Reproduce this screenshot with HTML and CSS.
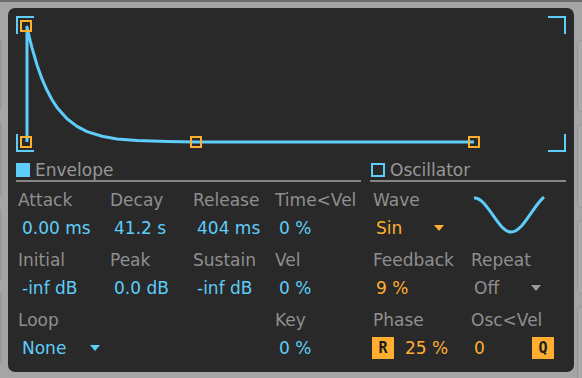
FILE: index.html
```html
<!DOCTYPE html>
<html lang="en">
<head>
<meta charset="UTF-8">
<meta name="viewport" content="width=device-width, initial-scale=1.0">
<title>Envelope / Oscillator</title>
<link rel="stylesheet" href="styles.css">
</head>
<body>

<div class="top-band"></div>

<div class="main">
    <div class="rail rail-left">
        <div class="tab" style="height:70px"></div>
        <div class="tab" style="height:75px"></div>
        <div class="tab" style="height:72px"></div>
        <div class="tab" style="height:70px"></div>
    </div>

    <div class="device">
        <!-- envelope display -->
        <svg class="display" width="566" height="152" viewBox="0 0 566 152">
            <g class="bracket">
                <path d="M9,26 V9 H26"/>
                <path d="M9,126 V143 H26"/>
                <path d="M540,9 H557 V26"/>
                <path d="M557,126 V143 H540"/>
            </g>
            <polyline class="curve" points="19,134 19,19 21,27.8 24,39.8 29,56.9 34,70.9 39,82.3 44,91.7 49,99.4 59,110.8 69,118.4 79,123.6 94,128.3 109,130.9 129,132.6 159,133.6 188,134 466,134"/>
            <g class="handle">
                <rect x="13" y="13" width="10" height="10"/>
                <rect x="13" y="129" width="10" height="10"/>
                <rect x="183" y="129" width="10" height="10"/>
                <rect x="461" y="129" width="10" height="10"/>
            </g>
        </svg>

        <div class="sections">
            <div class="section envelope">
                <div class="section-head">
                    <span class="toggle on"></span>
                    <span class="title">Envelope</span>
                </div>
                <div class="grid env-grid">
                    <div class="cell"><div class="label">Attack</div><div class="value">0.00 ms</div></div>
                    <div class="cell"><div class="label">Decay</div><div class="value">41.2 s</div></div>
                    <div class="cell"><div class="label">Release</div><div class="value">404 ms</div></div>
                    <div class="cell"><div class="label">Time&lt;Vel</div><div class="value">0 %</div></div>

                    <div class="cell"><div class="label">Initial</div><div class="value">-inf dB</div></div>
                    <div class="cell"><div class="label">Peak</div><div class="value">0.0 dB</div></div>
                    <div class="cell"><div class="label">Sustain</div><div class="value">-inf dB</div></div>
                    <div class="cell"><div class="label">Vel</div><div class="value">0 %</div></div>

                    <div class="cell"><div class="label">Loop</div><div class="value select loop-select"><span>None</span><span class="arrow"></span></div></div>
                    <div class="cell"></div>
                    <div class="cell"></div>
                    <div class="cell"><div class="label">Key</div><div class="value">0 %</div></div>
                </div>
            </div>

            <div class="section oscillator">
                <div class="section-head">
                    <span class="toggle"></span>
                    <span class="title">Oscillator</span>
                </div>
                <div class="grid osc-grid">
                    <div class="cell"><div class="label">Wave</div><div class="value orange select wave-select"><span>Sin</span><span class="arrow"></span></div></div>
                    <div class="cell">
                        <svg class="wave" width="72" height="40" viewBox="0 0 72 40">
                            <path d="M1,3 C14,2 25,37 38,37 C50,37 60,11 71,2"/>
                        </svg>
                    </div>

                    <div class="cell"><div class="label">Feedback</div><div class="value orange">9 %</div></div>
                    <div class="cell"><div class="label">Repeat</div><div class="value grey select repeat-select"><span>Off</span><span class="arrow"></span></div></div>

                    <div class="cell"><div class="label">Phase</div><div class="value orange btn-row"><span class="btn">R</span><span>25 %</span></div></div>
                    <div class="cell"><div class="label">Osc&lt;Vel</div><div class="value orange btn-row spread"><span>0</span><span class="btn">Q</span></div></div>
                </div>
            </div>
        </div>
    </div>

    <div class="rail rail-right">
        <div class="tab" style="height:70px"></div>
        <div class="tab" style="height:82px"></div>
        <div class="tab" style="height:72px"></div>
        <div class="tab" style="height:80px"></div>
    </div>
</div>

</body>
</html>
```

FILE: styles.css
```css
body, html {
    margin: 0;
    height: 100%;
    background-color: #a5a5a5;
    font-family: "DejaVu Sans", "Liberation Sans", sans-serif;
    font-size: 17px;
    overflow: hidden;
}
.top-band {
    height: 2px;
    background: #6c6c6c;
}
.main {
    display: flex;
    padding-top: 6px;
}
.rail {
    width: 8px;
    display: flex;
    flex-direction: column;
    gap: 12px;
    padding-top: 32px;
    box-sizing: border-box;
}
.rail-left .tab {
    width: 2px;
    background: #9a9a9a;
    border-radius: 0 3px 3px 0;
}
.rail-right .tab {
    width: 5px;
    margin-left: 3px;
    background: #a9a9a9;
    border: 1px solid #979797;
    border-right: none;
    border-radius: 5px 0 0 5px;
}
.device {
    width: 566px;
    height: 364px;
    background: #292929;
    border-radius: 7px;
    padding: 0 8px;
    box-sizing: border-box;
}
.display {
    display: block;
    margin: 0 -8px;
}
.bracket path {
    fill: none;
    stroke: #5ecdfa;
    stroke-width: 2;
}
.curve {
    fill: none;
    stroke: #5ecdfa;
    stroke-width: 3;
    stroke-linejoin: round;
}
.handle rect {
    fill: none;
    stroke: #ffae2f;
    stroke-width: 2;
}
.sections {
    display: flex;
    gap: 9px;
}
.envelope {
    width: 345px;
}
.oscillator {
    width: 196px;
}
.section-head {
    height: 20px;
    display: flex;
    align-items: center;
    gap: 5px;
    border-bottom: 2px solid #858585;
    line-height: 20px;
}
.section-head .title {
    color: #979797;
}
.toggle {
    width: 14px;
    height: 14px;
    box-sizing: border-box;
    border: 2px solid #5ecdfa;
}
.toggle.on {
    background: #5ecdfa;
}
.oscillator .toggle {
    margin-left: 1px;
}
.grid {
    display: grid;
    margin-top: 4px;
    grid-auto-rows: 60px;
}
.env-grid {
    grid-template-columns: 92px 83px 82px 1fr;
}
.osc-grid {
    grid-template-columns: 98px 1fr;
}
.label {
    color: #8f8f8f;
    line-height: 28px;
    padding-left: 2px;
    white-space: nowrap;
}
.osc-grid .label {
    padding-left: 3px;
}
.value {
    color: #5ecdfa;
    line-height: 28px;
    padding-left: 6px;
    white-space: nowrap;
}
.value.orange {
    color: #ffae2f;
}
.value.grey {
    color: #8f8f8f;
}
.select {
    display: flex;
    justify-content: space-between;
    align-items: center;
}
.arrow {
    width: 0;
    height: 0;
    border-left: 5px solid transparent;
    border-right: 5px solid transparent;
    border-top: 6px solid currentColor;
}
.loop-select {
    width: 78px;
}
.wave-select {
    width: 68px;
}
.repeat-select {
    width: 67px;
}
.repeat-select .arrow {
    border-top-color: #9a9a9a;
}
.wave {
    display: block;
    margin: 9px 0 0 5px;
}
.wave path {
    fill: none;
    stroke: #5ecdfa;
    stroke-width: 3;
}
.btn-row {
    display: flex;
    align-items: center;
    gap: 11px;
    padding-left: 2px;
}
.btn-row.spread {
    justify-content: space-between;
    padding-left: 6px;
    padding-right: 12px;
}
.btn {
    width: 22px;
    height: 22px;
    background: #ffae2f;
    color: #1c1c1c;
    font-family: "DejaVu Sans Mono", monospace;
    font-weight: bold;
    font-size: 15px;
    line-height: 22px;
    text-align: center;
}
```
